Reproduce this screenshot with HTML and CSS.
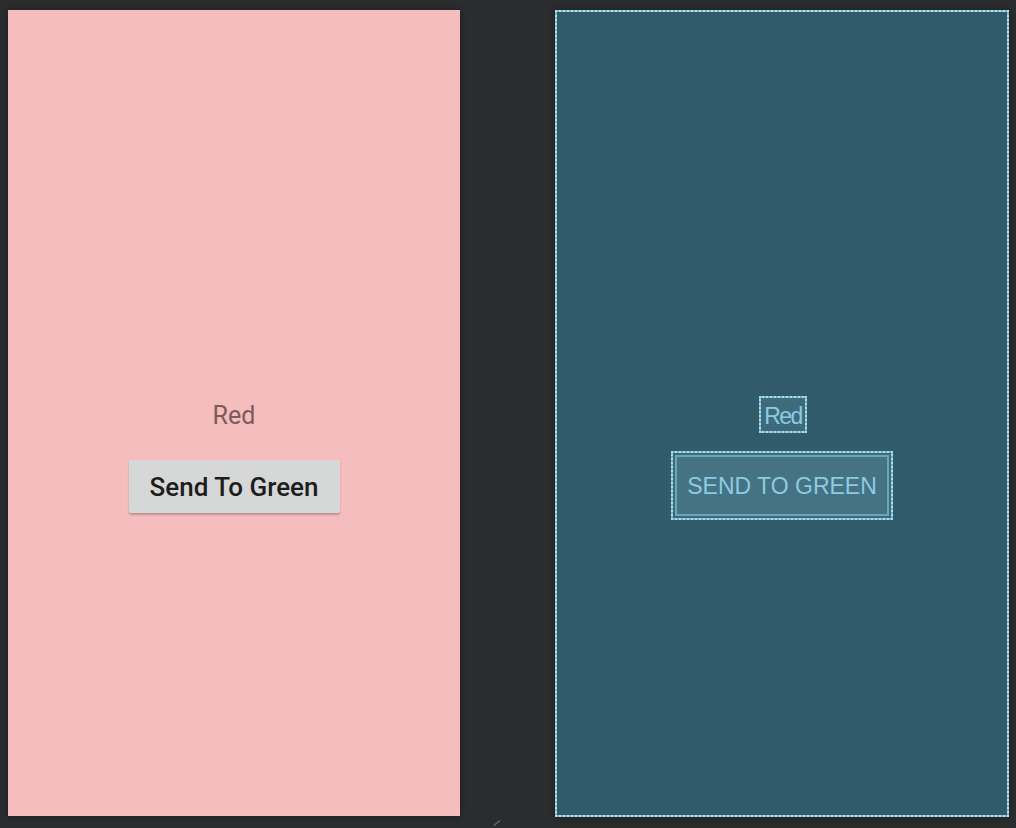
FILE: index.html
```html
<!DOCTYPE html>
<html lang="en">
<head>
    <meta charset="UTF-8">
    <meta name="viewport" content="width=device-width, initial-scale=1.0">
    <title>Layout Preview</title>
    <link rel="stylesheet" href="styles.css">
</head>
<body>
    <div class="design">
        <span class="label">Red</span>
        <button class="send-button">Send To Green</button>
    </div>

    <div class="blueprint">
        <span class="bp-label">Red</span>
        <div class="bp-button">
            <div class="bp-button-inner">SEND TO GREEN</div>
        </div>
    </div>

    <svg class="resize-handle" width="8" height="6" viewBox="0 0 8 6">
        <line x1="1" y1="5.5" x2="7" y2="0.5" stroke="#6b6b6e" stroke-width="1.2"/>
    </svg>
</body>
</html>
```

FILE: styles.css
```css
body {
    margin: 0;
    background: #2b2c2e;
    display: flex;
    align-items: flex-start;
    gap: 95px;
    padding: 10px 0 0 8px;
    height: 828px;
    box-sizing: border-box;
    overflow: hidden;
    position: relative;
}

.design {
    width: 452px;
    height: 806px;
    background: #f5bdbd;
    display: flex;
    flex-direction: column;
    align-items: center;
    padding-top: 391px;
    box-sizing: border-box;
    box-shadow: 0 0 6px rgba(0, 0, 0, 0.35);
}

.label {
    font-family: Roboto, "Noto Sans", sans-serif;
    font-size: 25px;
    line-height: 30px;
    color: #7b5c5c;
}

.send-button {
    margin-top: 29px;
    width: 211px;
    height: 53px;
    border: none;
    border-radius: 2px;
    background: #d6d7d7;
    box-shadow: 0 2px 2px rgba(0, 0, 0, 0.22);
    font-family: Roboto, "Noto Sans", sans-serif;
    font-weight: 500;
    font-size: 26px;
    color: #1d1d1d;
    padding: 0;
}

/* blueprint side: dotted light line laid over a softer solid one */
.blueprint {
    width: 454px;
    height: 807px;
    box-sizing: border-box;
    border: 2px dotted #b4e3f0;
    background: linear-gradient(#315a6b, #315a6b) padding-box, #78b6cb border-box;
    display: flex;
    flex-direction: column;
    align-items: center;
    padding-top: 384px;
    box-shadow: 0 0 6px rgba(0, 0, 0, 0.35);
}

.bp-label {
    width: 48px;
    height: 37px;
    box-sizing: border-box;
    border: 2px dotted #a9dcec;
    background: linear-gradient(#3e6b7c, #3e6b7c) padding-box, #74b2c6 border-box;
    font-family: "Liberation Sans", Arial, sans-serif;
    font-size: 23px;
    letter-spacing: -1.6px;
    color: #8dcbe0;
    display: flex;
    align-items: center;
    justify-content: center;
    padding-top: 4px;
    margin-left: 2px;
}

.bp-button {
    margin-top: 18px;
    width: 222px;
    height: 69px;
    box-sizing: border-box;
    border: 2px dotted #a9dcec;
    padding: 2px;
    background: linear-gradient(#3d6a7b, #3d6a7b) padding-box, #74b2c6 border-box;
}

.bp-button-inner {
    height: 100%;
    box-sizing: border-box;
    border: 2px solid #6aa7bb;
    background: #457384;
    font-family: "Liberation Sans", Arial, sans-serif;
    font-size: 23px;
    color: #8dcbe0;
    display: flex;
    align-items: center;
    justify-content: center;
    padding-top: 2px;
}

.resize-handle {
    position: absolute;
    left: 493px;
    top: 820px;
}
```
